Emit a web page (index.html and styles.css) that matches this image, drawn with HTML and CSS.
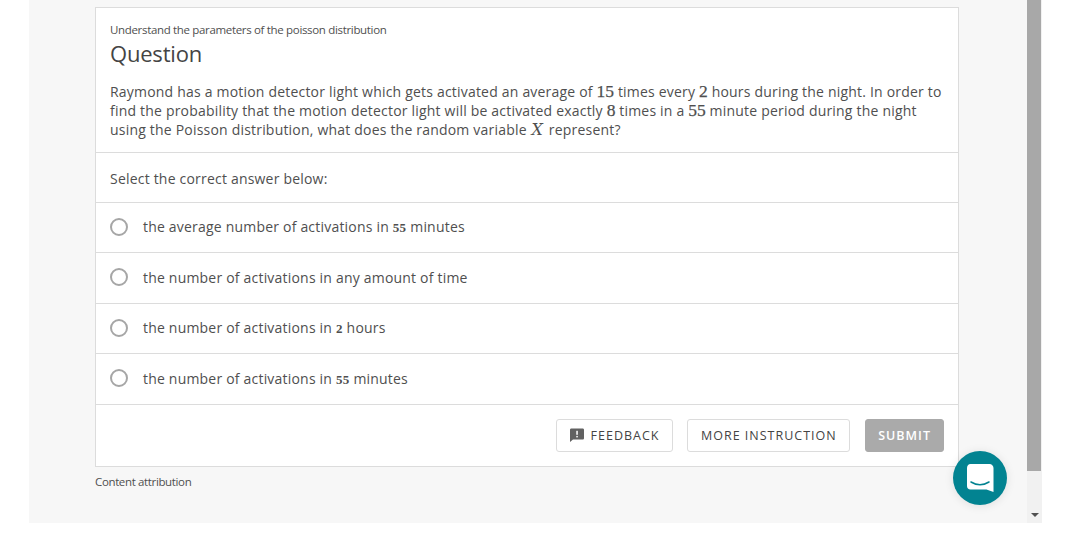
FILE: index.html
```html
<!DOCTYPE html>
<html lang="en">
<head>
    <meta charset="UTF-8">
    <meta name="viewport" content="width=device-width, initial-scale=1.0">
    <title>Question</title>
    <link rel="stylesheet" href="styles.css">
</head>
<body>
    <div class="frame">
        <div class="content">
            <div class="card">
                <div class="intro">
                    <p class="topic">Understand the parameters of the poisson distribution</p>
                    <h1>Question</h1>
                    <p class="prompt">Raymond has a motion detector light which gets activated an average of <span class="math">15</span> times every <span class="math">2</span> hours during the night. In order to find the probability that the motion detector light will be activated exactly <span class="math">8</span> times in a <span class="math">55</span> minute period during the night using the Poisson distribution, what does the random variable <span class="math var">X</span> represent?</p>
                </div>
                <div class="select-row">Select the correct answer below:</div>
                <label class="option"><span class="radio"></span><span>the average number of activations in <span class="num">55</span> minutes</span></label>
                <label class="option"><span class="radio"></span><span>the number of activations in any amount of time</span></label>
                <label class="option"><span class="radio"></span><span>the number of activations in <span class="num">2</span> hours</span></label>
                <label class="option"><span class="radio"></span><span>the number of activations in <span class="num">55</span> minutes</span></label>
                <div class="actions">
                    <button class="btn btn-feedback">
                        <svg class="feedback-icon" width="14" height="14" viewBox="0 0 14 14"><path d="M1.3 0.5h11.4c.7 0 1.3.6 1.3 1.3v8.4c0 .7-.6 1.3-1.3 1.3H3L0 14V1.8C0 1.1.6.5 1.3.5z" fill="#616161"/><rect x="6.3" y="2.8" width="1.5" height="4" fill="#fff"/><rect x="6.3" y="7.9" width="1.5" height="1.5" fill="#fff"/></svg>
                        FEEDBACK
                    </button>
                    <button class="btn">MORE INSTRUCTION</button>
                    <button class="btn btn-submit">SUBMIT</button>
                </div>
            </div>
            <p class="attribution">Content attribution</p>
        </div>
        <div class="scrollbar">
            <div class="thumb"></div>
            <div class="arrow-space"><span class="arrow"></span></div>
        </div>
        <div class="chat">
            <svg width="28" height="30" viewBox="0 0 28 30"><path d="M4 1h19c2.200 0 4 1.800 4 4v24l-7-2.600H4c-2.200 0-3.500-1.400-3.500-3.500V5C.5 2.800 1.800 1 4 1z" fill="#fff" transform="translate(.5 0)"/><path d="M5 19c5.500 3.400 12.500 3.400 18 0" fill="none" stroke="#028391" stroke-width="1.500" stroke-linecap="round"/></svg>
        </div>
    </div>
</body>
</html>
```

FILE: styles.css
```css
* {
    box-sizing: border-box;
}
body {
    margin: 0;
    background-color: white;
    font-family: "Open Sans", sans-serif;
    color: #4f4f4f;
}
.frame {
    position: relative;
    display: flex;
    width: 1013px;
    height: 523px;
    margin-left: 29px;
    background-color: #f7f7f7;
    overflow: hidden;
}
.content {
    flex: 1;
    padding: 7px 68px 0 66px;
}
.card {
    background-color: white;
    border: 1px solid #dcdcdc;
    height: 460px;
    display: flex;
    flex-direction: column;
}
.intro {
    height: 145px;
    padding: 14px 14px 0 14px;
    border-bottom: 1px solid #dcdcdc;
}
.topic {
    margin: 0;
    font-size: 11.5px;
    line-height: 16px;
    letter-spacing: -0.33px;
}
h1 {
    margin: 0;
    font-size: 22px;
    font-weight: 400;
    line-height: 30px;
    color: #444;
    letter-spacing: -0.2px;
}
.prompt {
    margin: 14px 0 0 0;
    font-size: 14px;
    line-height: 19.200px;
    letter-spacing: 0.2px;
}
.math {
    font-family: "Liberation Serif", serif;
    font-size: 17.500px;
    line-height: 0;
    letter-spacing: 0;
    -webkit-text-stroke: 0.25px #4f4f4f;
}
.var {
    font-family: "DejaVu Serif", serif;
    font-style: italic;
    font-size: 16px;
    margin: 0 2px 0 1px;
    -webkit-text-stroke: 0;
}
.select-row {
    height: 49.700px;
    padding: 2px 0 0 14px;
    display: flex;
    align-items: center;
    font-size: 14px;
    letter-spacing: 0.2px;
    border-bottom: 1px solid #dcdcdc;
}
.option {
    height: 50.500px;
    padding: 0 0 1.500px 14px;
    display: flex;
    align-items: center;
    gap: 15px;
    font-size: 14px;
    letter-spacing: 0.2px;
    border-bottom: 1px solid #dcdcdc;
}
.radio {
    width: 18px;
    height: 18px;
    border: 2px solid #a6a6a6;
    border-radius: 50%;
    background-color: white;
}
.num {
    font-family: "Liberation Serif", serif;
    font-size: 13px;
    font-weight: bold;
    letter-spacing: 0.3px;
}
.actions {
    flex: 1;
    display: flex;
    justify-content: flex-end;
    align-items: center;
    gap: 14px;
    padding: 0 14px 0 0;
}
.btn {
    height: 33px;
    padding: 0 12.500px;
    display: flex;
    align-items: center;
    gap: 7px;
    background-color: white;
    border: 1px solid #dcdcdc;
    border-radius: 3px;
    font-family: "Open Sans", sans-serif;
    font-size: 12.500px;
    letter-spacing: 1px;
    color: #444;
}
.btn-feedback {
    padding: 0 13px;
}
.btn-submit {
    margin-left: 1px;
    padding: 0 12px;
    background-color: #aaaaaa;
    border-color: #aaaaaa;
    color: white;
    font-weight: 600;
}
.attribution {
    margin: 7px 0 0 0;
    font-size: 11.500px;
    line-height: 16px;
    letter-spacing: -0.36px;
}
.scrollbar {
    width: 15px;
    display: flex;
    flex-direction: column;
    background-color: #f1f1f1;
}
.thumb {
    height: 471px;
    width: 14px;
    background-color: #a8a8a8;
}
.arrow-space {
    flex: 1;
    display: flex;
    justify-content: center;
    align-items: flex-end;
    padding-bottom: 6px;
}
.arrow {
    border-left: 4px solid transparent;
    border-right: 4px solid transparent;
    border-top: 4px solid #505050;
}
.chat {
    position: absolute;
    left: 924px;
    top: 451px;
    width: 54px;
    height: 54px;
    border-radius: 50%;
    background-color: #028391;
    box-shadow: 0 1px 10px rgba(0,0,0,0.1);
    display: flex;
    justify-content: center;
    align-items: center;
}
```
